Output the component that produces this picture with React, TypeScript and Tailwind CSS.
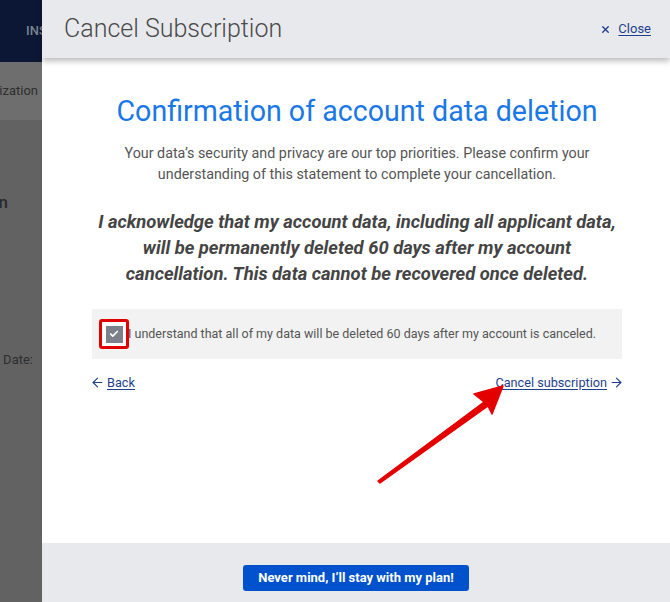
import { X, ArrowLeft, ArrowRight, Check } from 'lucide-react'

const font = { fontFamily: 'Roboto, "Noto Sans", sans-serif' }

function Backdrop() {
  return (
    <div className="flex w-[42px] shrink-0 flex-col overflow-hidden bg-[#626262]">
      <div className="flex h-[62px] items-center bg-[#0b1734] pl-[26px]">
        <span className="whitespace-nowrap text-[13px] font-medium text-[#7d8392]">INSIGHTS</span>
      </div>
      <div className="flex h-[58px] items-center justify-end overflow-hidden bg-[#6e6e6e] pr-[4px]">
        <span className="whitespace-nowrap text-[13px] text-[#2e2e2e]">Organization</span>
      </div>
      <div className="flex h-[166px] items-center justify-end overflow-hidden pr-[34px]">
        <span className="whitespace-nowrap text-[17px] font-medium text-[#2a2a2a]">Subscription</span>
      </div>
      <div className="flex h-[148px] items-center justify-end overflow-hidden pr-[9px]">
        <span className="whitespace-nowrap text-[13px] text-[#2e2e2e]">Renewal Date:</span>
      </div>
    </div>
  )
}

export default function App() {
  return (
    <div className="relative flex h-[602px] w-[670px] overflow-hidden bg-white" style={font}>
      <Backdrop />
      <div className="flex flex-1 flex-col bg-white">
        <header className="relative z-10 flex h-[58px] shrink-0 items-center justify-between bg-[#e8e9ed] pl-[22px] pr-[19px] shadow-[0_3px_6px_rgba(0,0,0,0.28)]">
          <h2 className="text-[25px] font-light text-[#4a4a4a]">Cancel Subscription</h2>
          <button className="flex items-center gap-[7px] text-[13px] text-[#1f3f8c]">
            <X className="size-[11px]" strokeWidth={3} />
            <span className="underline underline-offset-2">Close</span>
          </button>
        </header>

        <main className="flex flex-1 flex-col pt-[35px] pl-[50px] pr-[48px]">
          <h1 className="text-center text-[28.6px] leading-[36px] text-[#1a78e6]">
            Confirmation of account data deletion
          </h1>
          <p className="mt-[14px] px-[20px] text-center text-[14.3px] leading-[21px] text-[#555555]">
            Your data’s security and privacy are our top priorities. Please confirm your understanding of this
            statement to complete your cancellation.
          </p>
          <p className="mt-[24px] px-[4px] text-center text-[18.4px] font-bold italic leading-[26px] text-[#444444]">
            I acknowledge that my account data, including all applicant data, will be permanently deleted 60 days
            after my account cancellation. This data cannot be recovered once deleted.
          </p>

          <div className="mt-[22px] flex h-[50px] items-center bg-[#f2f2f2] pl-[7px]">
            <div className="flex size-[30px] shrink-0 items-center justify-center rounded-[3px] border-[3px] border-[#e00000] bg-white">
              <div className="flex size-[17px] items-center justify-center bg-[#7b8089]">
                <Check className="size-[10px] text-white" strokeWidth={4} />
              </div>
            </div>
            <span className="-ml-[1px] whitespace-nowrap text-[12.5px] text-[#555555]">
              I understand that all of my data will be deleted 60 days after my account is canceled.
            </span>
          </div>

          <div className="mt-[14px] flex items-center justify-between text-[12.7px] text-[#1f3f8c]">
            <a className="flex items-center gap-[2px]">
              <ArrowLeft className="-ml-[2px] size-[15px]" strokeWidth={1.8} />
              <span className="underline underline-offset-2">Back</span>
            </a>
            <a className="flex items-center gap-[2px]">
              <span className="underline underline-offset-2">Cancel subscription</span>
              <ArrowRight className="-mr-[2px] size-[15px]" strokeWidth={1.8} />
            </a>
          </div>
        </main>

        <footer className="flex h-[59px] shrink-0 justify-center bg-[#e8e9ed] pt-[22px]">
          <button className="h-[26px] rounded-[3px] bg-[#0052cc] px-[15px] text-[13px] font-bold text-white">
            Never mind, I’ll stay with my plan!
          </button>
        </footer>
      </div>

      <svg className="pointer-events-none absolute left-0 top-0" width="670" height="602" viewBox="0 0 670 602">
        <path
          d="M378 481 L484 402 L474 394 L503 386 L492 414 L488 406 L380 483 Z"
          fill="#e50000"
          stroke="#e50000"
          strokeWidth="1.5"
          strokeLinejoin="round"
        />
      </svg>
    </div>
  )
}
